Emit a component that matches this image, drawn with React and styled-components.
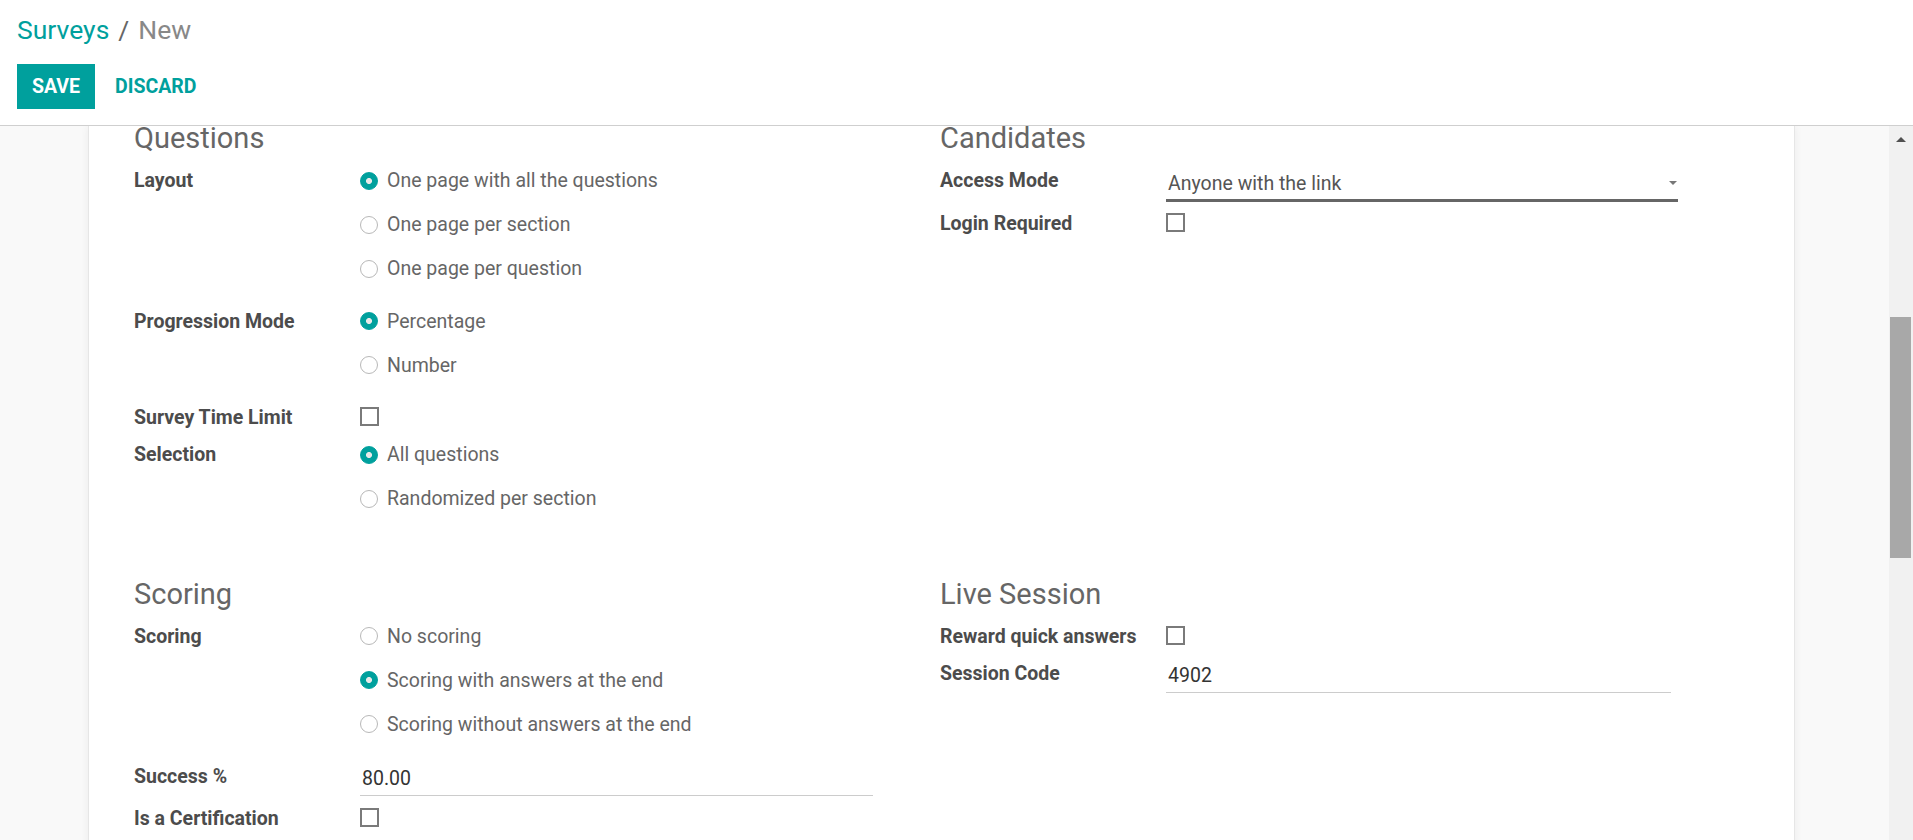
import React from "react";
import styled, { createGlobalStyle } from "styled-components";

const TEAL = "#00a09d";

const GlobalStyle = createGlobalStyle`
  html, body {
    margin: 0;
    padding: 0;
    height: 100%;
  }
  body {
    font-family: Roboto, "Noto Sans", Arial, sans-serif;
    font-size: 19.5px;
    color: #4c4c4c;
    background: #fff;
    overflow: hidden;
  }
`;

const Page = styled.div`
  height: 100vh;
  display: flex;
  flex-direction: column;
`;

const ControlPanel = styled.header`
  flex: none;
  height: 113px;
  padding: 12px 0 0 17px;
  border-bottom: 1px solid #cfcfcf;
  background: #fff;
`;

const Breadcrumb = styled.div`
  display: flex;
  font-size: 26.5px;
  line-height: 36px;
  height: 36px;
`;

const Crumb = styled.span`
  color: ${TEAL};
`;

const CrumbSep = styled.span`
  color: #666;
  padding: 0 9px;
`;

const CrumbActive = styled.span`
  color: #888;
`;

const Buttons = styled.div`
  display: flex;
  gap: 5px;
  margin-top: 16px;
`;

const Button = styled.button`
  height: 45px;
  padding: 0 15px;
  border: none;
  font-family: inherit;
  font-size: 19.5px;
  font-weight: 700;
  text-transform: uppercase;
  background: ${(p) => (p.$primary ? TEAL : "transparent")};
  color: ${(p) => (p.$primary ? "#fff" : TEAL)};
  cursor: pointer;
`;

const Body = styled.div`
  flex: 1;
  min-height: 0;
  display: flex;
`;

const Main = styled.main`
  flex: 1;
  min-width: 0;
  background: #f9f9f9;
  overflow: hidden;
`;

const Sheet = styled.div`
  box-sizing: border-box;
  width: 1707px;
  min-height: 900px;
  margin-left: 88px;
  padding: 0 0 0 45px;
  background: #fff;
  border-left: 1px solid #e6e6e6;
  border-right: 1px solid #e6e6e6;
  box-shadow: 0 0 8px rgba(0, 0, 0, 0.06);
`;

const GroupRow = styled.div`
  display: grid;
  grid-template-columns: 806px 1fr;
  margin-top: ${(p) => p.$gap || 0}px;
`;

const Group = styled.section`
  display: flex;
  flex-direction: column;
`;

const GroupTitle = styled.h2`
  margin: 0 0 17px;
  font-size: 29px;
  line-height: 24px;
  font-weight: 400;
  color: #666;
`;

const FieldRow = styled.div`
  display: grid;
  grid-template-columns: 226px 512px;
  align-items: start;
`;

const Label = styled.label`
  font-weight: 700;
  line-height: 27px;
  color: #4c4c4c;
  white-space: nowrap;
`;

const RadioList = styled.div`
  display: flex;
  flex-direction: column;
  padding-bottom: 8.5px;
`;

const RadioOption = styled.div`
  display: flex;
  align-items: center;
  gap: 9px;
  height: 27px;
  margin-bottom: 17px;
  line-height: 27px;
  color: #666;
`;

const RadioDot = styled.span`
  flex: none;
  box-sizing: border-box;
  width: 18px;
  height: 18px;
  border-radius: 50%;
  border: 1px solid ${(p) => (p.$on ? TEAL : "#b8b8b8")};
  background: ${(p) =>
    p.$on
      ? `radial-gradient(circle, #e9e9e9 0 2.6px, ${TEAL} 3.4px)`
      : "#fff"};
`;

const CheckCell = styled.div`
  height: 27px;
  padding-bottom: 10px;
`;

const CheckBox = styled.span`
  display: block;
  box-sizing: border-box;
  width: 19px;
  height: 19px;
  margin-top: 3px;
  border: 2px solid #7a7a7a;
  background: #fff;
`;

const InputCell = styled.div`
  padding-bottom: 8.5px;
`;

const TextInput = styled.div`
  width: ${(p) => p.$width || 512}px;
  height: 32px;
  padding-left: 2px;
  box-sizing: content-box;
  line-height: 32px;
  border-bottom: 1px solid #cccccc;
  color: #333;
`;

const SelectCell = styled.div`
  padding-bottom: 8px;
`;

const SelectBox = styled.div`
  display: flex;
  align-items: center;
  justify-content: space-between;
  height: 32px;
  padding: 0 1px 0 2px;
  line-height: 27px;
  border-bottom: 3px solid #666;
  color: #555;
`;

const Caret = styled.span`
  width: 0;
  height: 0;
  border-left: 4px solid transparent;
  border-right: 4px solid transparent;
  border-top: 4px solid #777;
`;

const ScrollTrack = styled.div`
  flex: none;
  width: 24px;
  background: #f1f1f1;
  display: flex;
  flex-direction: column;
`;

const ScrollArrow = styled.div`
  height: 26px;
  display: flex;
  align-items: center;
  justify-content: center;

  &::before {
    content: "";
    border-left: 5px solid transparent;
    border-right: 5px solid transparent;
    border-bottom: 5px solid #505050;
  }
`;

const ScrollThumb = styled.div`
  width: 21px;
  height: 241px;
  margin: 165px 0 0 1px;
  background: #a8a8a8;
`;

const Radio = ({ options, value }) => (
  <RadioList>
    {options.map((o, i) => (
      <RadioOption key={o}>
        <RadioDot $on={i === value} />
        {o}
      </RadioOption>
    ))}
  </RadioList>
);

const Field = ({ label, children }) => (
  <FieldRow>
    <Label>{label}</Label>
    {children}
  </FieldRow>
);

const Check = () => (
  <CheckCell>
    <CheckBox />
  </CheckCell>
);

export default function App() {
  return (
    <>
      <GlobalStyle />
      <Page>
        <ControlPanel>
          <Breadcrumb>
            <Crumb>Surveys</Crumb>
            <CrumbSep>/</CrumbSep>
            <CrumbActive>New</CrumbActive>
          </Breadcrumb>
          <Buttons>
            <Button $primary>Save</Button>
            <Button>Discard</Button>
          </Buttons>
        </ControlPanel>
        <Body>
          <Main>
            <Sheet>
              <GroupRow>
                <Group>
                  <GroupTitle>Questions</GroupTitle>
                  <Field label="Layout">
                    <Radio
                      value={0}
                      options={[
                        "One page with all the questions",
                        "One page per section",
                        "One page per question",
                      ]}
                    />
                  </Field>
                  <Field label="Progression Mode">
                    <Radio value={0} options={["Percentage", "Number"]} />
                  </Field>
                  <Field label="Survey Time Limit">
                    <Check />
                  </Field>
                  <Field label="Selection">
                    <Radio
                      value={0}
                      options={["All questions", "Randomized per section"]}
                    />
                  </Field>
                </Group>
                <Group>
                  <GroupTitle>Candidates</GroupTitle>
                  <Field label="Access Mode">
                    <SelectCell>
                      <SelectBox>
                        Anyone with the link
                        <Caret />
                      </SelectBox>
                    </SelectCell>
                  </Field>
                  <Field label="Login Required">
                    <Check />
                  </Field>
                </Group>
              </GroupRow>
              <GroupRow $gap={44}>
                <Group>
                  <GroupTitle>Scoring</GroupTitle>
                  <Field label="Scoring">
                    <Radio
                      value={1}
                      options={[
                        "No scoring",
                        "Scoring with answers at the end",
                        "Scoring without answers at the end",
                      ]}
                    />
                  </Field>
                  <Field label="Success %">
                    <InputCell>
                      <TextInput $width={511}>80.00</TextInput>
                    </InputCell>
                  </Field>
                  <Field label="Is a Certification">
                    <Check />
                  </Field>
                </Group>
                <Group>
                  <GroupTitle>Live Session</GroupTitle>
                  <Field label="Reward quick answers">
                    <Check />
                  </Field>
                  <Field label="Session Code">
                    <InputCell>
                      <TextInput $width={503}>4902</TextInput>
                    </InputCell>
                  </Field>
                </Group>
              </GroupRow>
            </Sheet>
          </Main>
          <ScrollTrack>
            <ScrollArrow />
            <ScrollThumb />
          </ScrollTrack>
        </Body>
      </Page>
    </>
  );
}
